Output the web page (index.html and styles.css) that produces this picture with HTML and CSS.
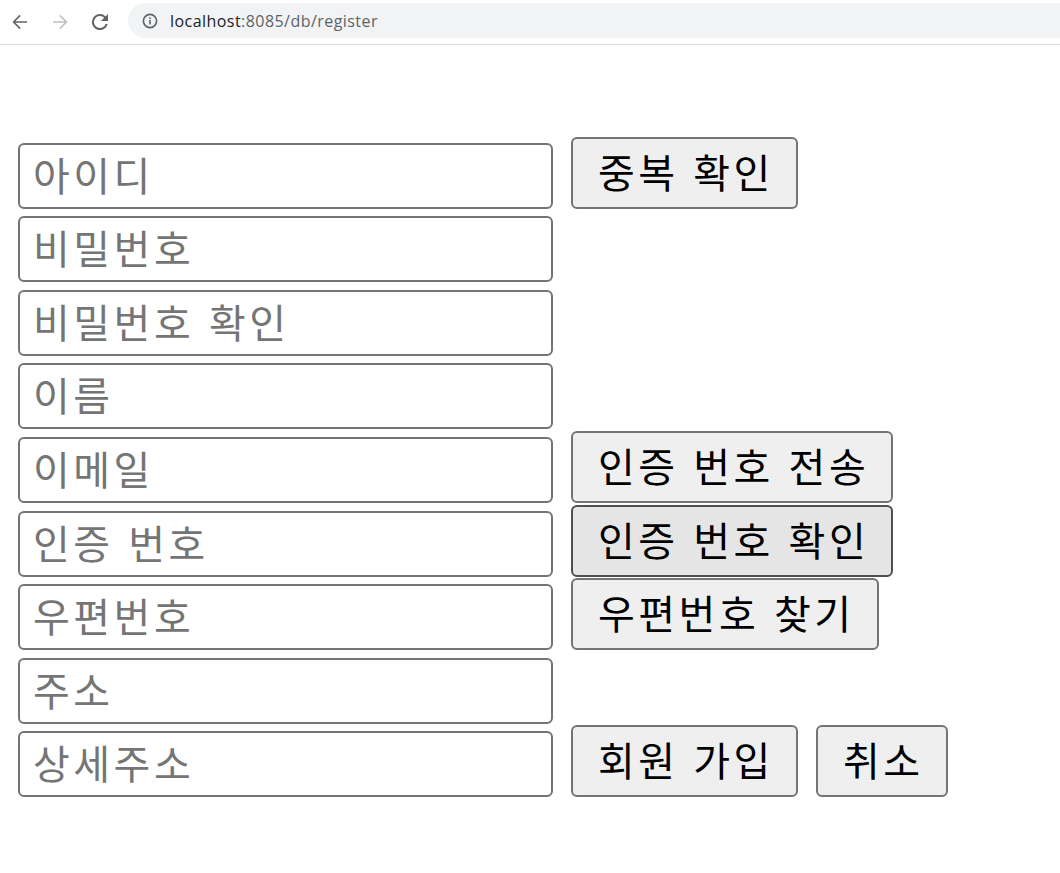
FILE: index.html
```html
<!DOCTYPE html>
<html lang="ko">
<head>
  <meta charset="UTF-8" />
  <title>회원 가입</title>
  <link rel="stylesheet" href="styles.css">
</head>
<body>

  <div class="toolbar">
    <span class="nav-btn">
      <svg width="16" height="16" viewBox="0 0 16 16"><path d="M15 7.2H3.4l5.3-5.3L7.6.8.5 8l7.1 7.2 1.1-1.1-5.3-5.3H15z" fill="#5f6368"/></svg>
    </span>
    <span class="nav-btn">
      <svg width="16" height="16" viewBox="0 0 16 16"><path d="M1 7.2h11.6L7.3 1.9 8.4.8 15.5 8l-7.1 7.2-1.1-1.1 5.3-5.3H1z" fill="#bdc1c6"/></svg>
    </span>
    <span class="nav-btn">
      <svg width="16" height="16" viewBox="0 0 16 16"><path d="M13.6 2.4A7.9 7.9 0 0 0 8 0a8 8 0 1 0 7.7 10h-2.1A6 6 0 1 1 8 2c1.7 0 3.1.7 4.2 1.8L9 7h7V0l-2.4 2.4z" fill="#5f6368"/></svg>
    </span>
    <div class="omnibox">
      <svg width="16" height="16" viewBox="0 0 16 16"><circle cx="8" cy="8" r="6.6" fill="none" stroke="#5f6368" stroke-width="1.6"/><rect x="7.2" y="7" width="1.6" height="4.4" fill="#5f6368"/><rect x="7.2" y="4.4" width="1.6" height="1.6" fill="#5f6368"/></svg>
      <span class="url"><span class="host">localhost</span>:8085/db/register</span>
    </div>
  </div>

  <form class="register">
    <div class="row">
      <input type="text" placeholder="아이디">
      <button type="button">중복 확인</button>
    </div>
    <div class="row">
      <input type="password" placeholder="비밀번호">
    </div>
    <div class="row">
      <input type="password" placeholder="비밀번호 확인">
    </div>
    <div class="row">
      <input type="text" placeholder="이름">
    </div>
    <div class="row">
      <input type="text" placeholder="이메일">
      <button type="button">인증 번호 전송</button>
    </div>
    <div class="row">
      <input type="text" placeholder="인증 번호">
      <button type="button" class="hover">인증 번호 확인</button>
    </div>
    <div class="row">
      <input type="text" placeholder="우편번호">
      <button type="button">우편번호 찾기</button>
    </div>
    <div class="row">
      <input type="text" placeholder="주소">
    </div>
    <div class="row">
      <input type="text" placeholder="상세주소">
      <button type="submit">회원 가입</button>
      <button type="button">취소</button>
    </div>
  </form>

</body>
</html>
```

FILE: styles.css
```css
body {
  margin: 0;
  background: white;
  font-family: "Noto Sans CJK KR", "Noto Sans", sans-serif;
}

.toolbar {
  height: 44px;
  border-bottom: 1px solid #dadce0;
  display: flex;
  align-items: center;
  padding-left: 0;
  box-sizing: content-box;
}

.nav-btn {
  width: 40px;
  height: 32px;
  display: flex;
  align-items: center;
  justify-content: center;
}

.omnibox {
  flex: 1;
  height: 35px;
  margin-left: 8px;
  margin-top: -3px;
  background: #f1f3f4;
  border-radius: 18px 0 0 18px;
  display: flex;
  align-items: center;
  padding-left: 14px;
}

.url {
  margin-left: 12px;
  font-family: "Open Sans", "Liberation Sans", sans-serif;
  font-size: 16px;
  letter-spacing: 0.45px;
  color: #5f6368;
}

.url .host {
  color: #202124;
}

.register {
  padding: 90px 0 0 18px;
}

.row {
  height: 73.6px;
  display: flex;
  align-items: flex-end;
  gap: 18px;
}

.row input {
  width: 535px;
  height: 66px;
  box-sizing: border-box;
  border: 2px solid #747474;
  border-radius: 6px;
  padding: 0 13px 4px;
  font-family: inherit;
  font-size: 40px;
  letter-spacing: 3.5px;
  color: black;
  outline: none;
}

.row input::placeholder {
  color: #757575;
}

.row button {
  height: 72px;
  box-sizing: border-box;
  border: 2px solid #747474;
  border-radius: 6px;
  background: #efefef;
  padding: 0 22px 4px 25px;
  font-family: inherit;
  font-size: 40px;
  letter-spacing: 3.5px;
  color: black;
}

.row button.hover {
  background: #e5e5e5;
  border-color: #4f4f4f;
}
```
